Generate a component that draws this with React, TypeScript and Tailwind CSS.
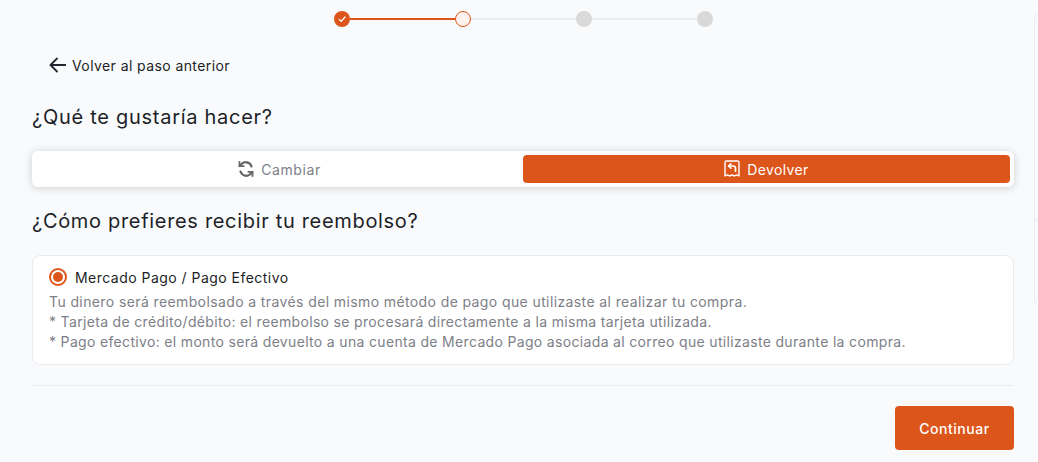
import React from "react";

const ORANGE = "bg-[#dc551a]";

function Dot({ kind }: { kind: "done" | "current" | "todo" }) {
  if (kind === "done")
    return (
      <div className={`w-4 h-4 rounded-full ${ORANGE} flex items-center justify-center shrink-0`}>
        <svg width="8" height="8" viewBox="0 0 10 10" fill="none" stroke="#fff" strokeWidth="1.6" strokeLinecap="round" strokeLinejoin="round">
          <path d="M1.5 5.5 4 8l4.8-5.5" />
        </svg>
      </div>
    );
  if (kind === "current")
    return <div className="w-4 h-4 rounded-full bg-[#fdf2ee] border border-[#dc551a] shrink-0" />;
  return <div className="w-4 h-4 rounded-full bg-[#d9d9d9] shrink-0" />;
}

export default function App() {
  return (
    <div
      className="w-[1038px] h-[462px] overflow-hidden flex bg-[#f9fafc] text-[#1c1f28]"
      style={{ fontFamily: '"Inter", "Noto Sans", sans-serif' }}
    >
      <main className="w-[982px] ml-8 shrink-0 flex flex-col">
        <div className="flex items-center justify-center mt-[11px] h-4">
          <Dot kind="done" />
          <div className="w-[105px] h-0.5 bg-[#dc551a]" />
          <Dot kind="current" />
          <div className="w-[105px] h-0.5 bg-[#ebecef]" />
          <Dot kind="todo" />
          <div className="w-[105px] h-0.5 bg-[#ebecef]" />
          <Dot kind="todo" />
        </div>

        <div className="flex items-center gap-[6px] ml-4 mt-[27px] h-[22px]">
          <svg width="18" height="18" viewBox="0 0 18 18" fill="none" stroke="#23262e" strokeWidth="1.8" strokeLinecap="round" strokeLinejoin="round">
            <path d="M17.5 9H2.5M9 2.5 2.5 9 9 15.5" />
          </svg>
          <span className="text-[14px] font-normal tracking-[0.41px]">Volver al paso anterior</span>
        </div>

        <h1 className="mt-[26px] text-[20px] leading-[30px] font-normal tracking-[0.72px]">¿Qué te gustaría hacer?</h1>

        <div className="mt-[19px] h-9 bg-white rounded-md shadow-[0_1px_8px_rgba(0,0,0,0.18)] p-1 flex">
          <div className="flex-1 flex items-center justify-center gap-[7px] text-[#7d8087] text-[14px] tracking-[0.6px]">
            <svg width="16" height="16" viewBox="0 0 16 16" fill="none" stroke="#666" strokeWidth="2.2" strokeLinecap="round" strokeLinejoin="round">
              <path d="M13.5 5.5A6 6 0 0 0 3 3.6L1.6 5" />
              <path d="M1.5 1v4.2h4.2" strokeWidth="1.8" />
              <path d="M2.5 10.5A6 6 0 0 0 13 12.4l1.4-1.4" />
              <path d="M14.5 15v-4.2h-4.2" strokeWidth="1.8" />
            </svg>
            <span>Cambiar</span>
          </div>
          <div className={`flex-1 flex items-center justify-center gap-[7px] ${ORANGE} rounded text-white text-[14px] tracking-[0.35px]`}>
            <svg width="16" height="18" viewBox="0 0 16 18" fill="none" stroke="#fff" strokeWidth="1.4" strokeLinecap="round" strokeLinejoin="round">
              <path d="M2.5 1h11A1.5 1.5 0 0 1 15 2.5V16l-2.3-1.2L10.4 16 8 14.8 5.6 16l-2.3-1.2L1 16V2.5A1.5 1.5 0 0 1 2.5 1Z" />
              <path d="M6.8 3.8 4.6 6l2.2 2.2" strokeWidth="1.7" />
              <path d="M4.8 6h4.4a2.3 2.3 0 0 1 2.3 2.3v2.9" strokeWidth="1.7" />
            </svg>
            <span>Devolver</span>
          </div>
        </div>

        <h2 className="mt-[19px] text-[20px] leading-[30px] font-normal tracking-[0.68px]">¿Cómo prefieres recibir tu reembolso?</h2>

        <div className="mt-[19px] h-[110px] bg-white border border-[#ebecef] rounded-lg pl-4 pt-[11px]">
          <div className="flex items-center gap-[8px] h-5">
            <div className="w-[18px] h-[18px] rounded-full border-2 border-[#dc551a] flex items-center justify-center">
              <div className="w-[10px] h-[10px] rounded-full bg-[#dc551a]" />
            </div>
            <span className="text-[14px] font-normal tracking-[0.47px]">Mercado Pago / Pago Efectivo</span>
          </div>
          <div className="mt-[5px] text-[14px] leading-5 text-[#7d8087] tracking-[0.33px]">
            <p className="tracking-[0.39px]">Tu dinero será reembolsado a través del mismo método de pago que utilizaste al realizar tu compra.</p>
            <p>* Tarjeta de crédito/débito: el reembolso se procesará directamente a la misma tarjeta utilizada.</p>
            <p>* Pago efectivo: el monto será devuelto a una cuenta de Mercado Pago asociada al correo que utilizaste durante la compra.</p>
          </div>
        </div>

        <div className="mt-5 h-px bg-[#ebecef]" />

        <div className="mt-5 flex justify-end">
          <div className={`w-[119px] h-[44px] rounded ${ORANGE} text-white text-[14px] font-medium tracking-[0.55px] flex items-center justify-center`}>
            Continuar
          </div>
        </div>
      </main>

      <aside className="ml-5 mt-[12px] w-[40px] h-[295px] shrink-0 border border-[#ebecef] rounded-l-lg flex flex-col">
        <div className="h-[208px] border-b border-[#ebecef]" />
      </aside>
    </div>
  );
}
